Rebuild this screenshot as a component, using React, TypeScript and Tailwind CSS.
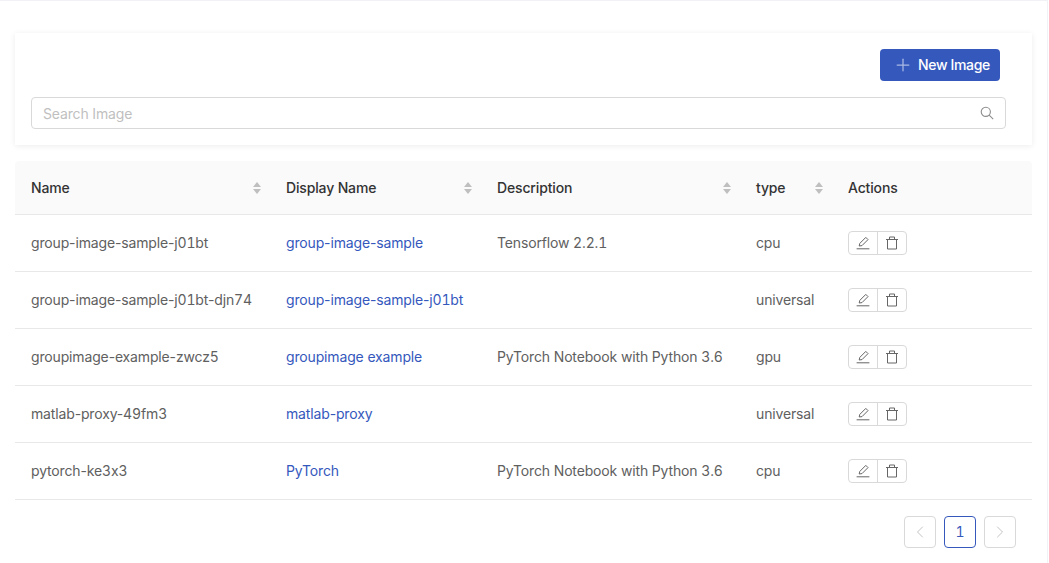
import { ChevronLeft, ChevronRight, Plus } from "lucide-react";

interface ImageRow {
  name: string;
  displayName: string;
  description: string;
  type: string;
}

const rows: ImageRow[] = [
  { name: "group-image-sample-j01bt", displayName: "group-image-sample", description: "Tensorflow 2.2.1", type: "cpu" },
  { name: "group-image-sample-j01bt-djn74", displayName: "group-image-sample-j01bt", description: "", type: "universal" },
  { name: "groupimage-example-zwcz5", displayName: "groupimage example", description: "PyTorch Notebook with Python 3.6", type: "gpu" },
  { name: "matlab-proxy-49fm3", displayName: "matlab-proxy", description: "", type: "universal" },
  { name: "pytorch-ke3x3", displayName: "PyTorch", description: "PyTorch Notebook with Python 3.6", type: "cpu" },
];

// 숫자만 tabular (하이픈은 비례폭 유지)
function Nums({ text }: { text: string }) {
  return (
    <>
      {text.split(/([\d.]+)/).map((part, i) =>
        i % 2 === 1 ? (
          <span key={i} className="tabular-nums">
            {part}
          </span>
        ) : (
          part
        )
      )}
    </>
  );
}

function SortCaret() {
  return (
    <svg width="10" height="14" viewBox="0 0 10 14" fill="#bfbfbf">
      <path d="M5 1 L9 6 L1 6 Z" />
      <path d="M1 8 L9 8 L5 13 Z" />
    </svg>
  );
}

function SearchIcon() {
  return (
    <svg width="14" height="14" viewBox="0 0 14 14" fill="none" stroke="#8c8c8c" strokeWidth="1.1">
      <circle cx="5.8" cy="5.8" r="4.6" />
      <path d="M9.2 9.2 L13.2 13.2" />
    </svg>
  );
}

function EditIcon() {
  return (
    <svg width="14" height="14" viewBox="0 0 14 14" fill="none" stroke="#666666" strokeWidth="1">
      <path d="M3.2 10 L3.8 7.4 L9.8 1.4 L12 3.6 L6 9.6 Z" />
      <path d="M0.6 12.8 H13.4" />
    </svg>
  );
}

function TrashIcon() {
  return (
    <svg width="14" height="14" viewBox="0 0 14 14" fill="none" stroke="#666666" strokeWidth="1">
      <path d="M1 3.5 H13" />
      <path d="M4.5 3.5 V1 H9.5 V3.5" />
      <path d="M2.5 3.5 V13 H11.5 V3.5" />
    </svg>
  );
}

function HeaderCell({ label, sortable = true }: { label: string; sortable?: boolean }) {
  return (
    <th className="h-[54px] border-b border-[#e8e8e8] bg-[#fafafa] pl-4 pr-2 text-left font-medium text-[#333333] first:rounded-tl last:rounded-tr">
      <div className="flex items-center justify-between">
        <span>{label}</span>
        {sortable && <SortCaret />}
      </div>
    </th>
  );
}

export default function App() {
  return (
    <div className="h-[563px] w-[1049px] overflow-hidden bg-white font-['Inter',sans-serif] text-sm tracking-[-0.15px] text-[#606060] [font-variant-ligatures:no-contextual]">
      <div className="h-full w-[1048px] border-t border-r border-[#f0f2f5] pl-[15px] pr-[15px] pt-8">
        {/* 검색 카드 */}
        <div className="h-[112px] bg-white pl-4 pr-[26px] pt-4 shadow-[0_1px_6px_rgba(0,0,0,0.08)]">
          <div className="flex justify-end pr-[6px]">
            <button className="flex h-8 w-[120px] items-center gap-[5px] rounded bg-[#3558bd] pl-[13px] text-white">
              <Plus size={20} strokeWidth={1.5} className="text-[#a9b8e4]" />
              <span className="font-medium tracking-[-0.35px]">New Image</span>
            </button>
          </div>
          <div className="mt-4 flex h-8 items-center justify-between rounded border border-[#d9d9d9] px-[11px]">
            <span className="pt-[2px] text-[#bfbfbf]">Search Image</span>
            <SearchIcon />
          </div>
        </div>

        {/* 이미지 목록 */}
        <table className="mt-4 w-[1017px] table-fixed border-separate border-spacing-0">
          <colgroup>
            <col className="w-[255px]" />
            <col className="w-[211px]" />
            <col className="w-[259px]" />
            <col className="w-[92px]" />
            <col className="w-[200px]" />
          </colgroup>
          <thead>
            <tr>
              <HeaderCell label="Name" />
              <HeaderCell label="Display Name" />
              <HeaderCell label="Description" />
              <HeaderCell label="type" />
              <HeaderCell label="Actions" sortable={false} />
            </tr>
          </thead>
          <tbody>
            {rows.map((row) => (
              <tr key={row.name} className="h-[57px]">
                <td className="border-b border-[#e8e8e8] px-4 whitespace-nowrap">
                  <Nums text={row.name} />
                </td>
                <td className="border-b border-[#e8e8e8] px-4 whitespace-nowrap text-[#3558bd]">
                  <Nums text={row.displayName} />
                </td>
                <td className="border-b border-[#e8e8e8] px-4 whitespace-nowrap">
                  <Nums text={row.description} />
                </td>
                <td className="border-b border-[#e8e8e8] px-4">{row.type}</td>
                <td className="border-b border-[#e8e8e8] px-4">
                  <div className="flex h-6 w-[59px] rounded border border-[#d9d9d9]">
                    <span className="flex flex-1 items-center justify-center border-r border-[#d9d9d9]">
                      <EditIcon />
                    </span>
                    <span className="flex flex-1 items-center justify-center">
                      <TrashIcon />
                    </span>
                  </div>
                </td>
              </tr>
            ))}
          </tbody>
        </table>

        <div className="mt-4 flex justify-end gap-2 pr-4">
          <span className="flex size-8 items-center justify-center rounded border border-[#d9d9d9] text-[#c4c4c4]">
            <ChevronLeft size={20} strokeWidth={1.2} />
          </span>
          <span className="flex size-8 items-center justify-center rounded border border-[#3558bd] text-[#3558bd] tabular-nums">
            1
          </span>
          <span className="flex size-8 items-center justify-center rounded border border-[#d9d9d9] text-[#c4c4c4]">
            <ChevronRight size={20} strokeWidth={1.2} />
          </span>
        </div>
      </div>
    </div>
  );
}
